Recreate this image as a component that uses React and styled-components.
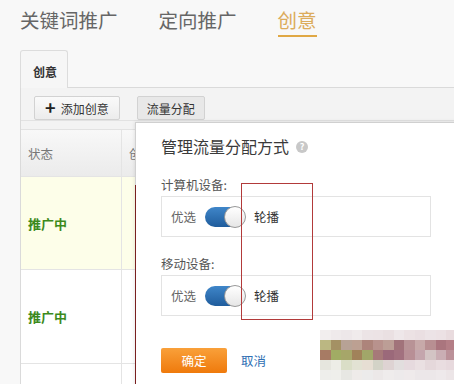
import React from 'react'
import styled, { createGlobalStyle } from 'styled-components'

const Global = createGlobalStyle`
  html, body { margin: 0; padding: 0; }
  body {
    font-family: "Noto Sans CJK SC", "Noto Sans", sans-serif;
    background: #f8f8f8;
  }
`

const Page = styled.div`
  position: relative;
  width: 454px;
  height: 384px;
  overflow: hidden;
  background: #f8f8f8;
  padding-left: 20px;
  box-sizing: border-box;
`

const Nav = styled.div`
  display: flex;
  gap: 41px;
  height: 50px;
  padding-top: 7px;
  box-sizing: border-box;
`

const NavItem = styled.div`
  font-size: 19.5px;
  line-height: 26px;
  height: 28px;
  color: ${p => (p.active ? '#dcac5c' : '#666')};
  border-bottom: 2px solid ${p => (p.active ? '#e0a845' : 'transparent')};
`

const TabRow = styled.div`
  display: flex;
  height: 37px;
`

const Tab = styled.div`
  width: 48px;
  height: 38px;
  box-sizing: border-box;
  border: 1px solid #dcdcdc;
  border-bottom: none;
  border-radius: 3px 3px 0 0;
  background: #f6f6f6;
  font-size: 12px;
  font-weight: bold;
  color: #333;
  padding: 12px 0 0 12px;
  position: relative;
  z-index: 1;
`

const Panel = styled.div`
  border-top: 1px solid #dadada;
  border-left: 1px solid #dadada;
  background: #f3f3f3;
`

const Toolbar = styled.div`
  display: flex;
  gap: 17px;
  padding: 8px 0 0 13px;
  height: 33px;
  box-sizing: border-box;
  border-bottom: 1px solid #e2e2e2;
`

const Button = styled.div`
  height: 24px;
  box-sizing: border-box;
  padding: 0 ${p => p.px || 9}px;
  border: 1px solid #d2d2d2;
  border-radius: 2px;
  background: ${p => (p.pressed ? '#e8e8e8' : 'linear-gradient(#fafafa, #ececec)')};
  font-size: 12px;
  color: #333;
  display: flex;
  align-items: center;
  gap: 5px;
`

const Plus = styled.span`
  font-size: 18px;
  font-weight: bold;
  line-height: 1;
  color: #222;
  margin-top: -2px;
`

const Table = styled.div`
  margin-top: 8px;
  background: #fff;
`

const Row = styled.div`
  display: grid;
  grid-template-columns: 101px 1fr;
  height: ${p => p.h}px;
  border-bottom: 1px solid #e4e4e4;
  background: ${p => p.bg || '#fff'};
`

const Cell = styled.div`
  display: flex;
  align-items: center;
  padding-left: 7px;
  border-right: 1px solid #e4e4e4;
  font-size: ${p => (p.status ? 13 : 12.5)}px;
  font-weight: ${p => (p.status ? 'bold' : 'normal')};
  color: ${p => (p.status ? '#3c8a1c' : '#777')};
`

const HeadRow = styled(Row)`
  background: linear-gradient(#f8f8f8, #ebebeb);
  border-top: 1px solid #e2e2e2;
`

const Popup = styled.div`
  position: absolute;
  left: 135px;
  top: 122px;
  width: 330px;
  height: 272px;
  box-sizing: border-box;
  background: #fff;
  border: 1px solid #d0d0d0;
  box-shadow: 0 0 4px rgba(0, 0, 0, 0.12);
  padding: 12px 0 0 25px;
  &::before {
    content: '';
    position: absolute;
    left: -1px;
    top: 62px;
    bottom: 0;
    width: 1px;
    background: #7a2020;
  }
`

const Title = styled.div`
  display: flex;
  align-items: center;
  gap: 7px;
  font-size: 16px;
  line-height: 22px;
  color: #3a3a3a;
`

const Help = styled.span`
  width: 12px;
  height: 12px;
  border-radius: 50%;
  background: #c8c8c8;
  color: #fff;
  font-size: 9px;
  font-weight: bold;
  display: inline-flex;
  align-items: center;
  justify-content: center;
  margin-top: 2px;
`

const Label = styled.div`
  font-size: 12.5px;
  line-height: 16px;
  color: #555;
  margin-top: ${p => p.mt}px;
`

const Box = styled.div`
  width: 270px;
  height: 41px;
  box-sizing: border-box;
  margin-top: 3px;
  border: 1px solid #e3e3e3;
  display: flex;
  align-items: center;
  padding-left: 9px;
  font-size: 12.5px;
`

const Opt = styled.span`
  color: ${p => (p.on ? '#333' : '#666')};
`

const Toggle = styled.div`
  position: relative;
  width: 36px;
  height: 20px;
  margin: 0 13px 0 9px;
  border-radius: 10px;
  background: linear-gradient(#3f86c9, #1f5c9c);
`

const Knob = styled.div`
  position: absolute;
  right: -5px;
  top: -1px;
  width: 20px;
  height: 20px;
  border-radius: 50%;
  background: linear-gradient(#fff, #e6e6e6);
  border: 1px solid #999;
`

const Actions = styled.div`
  display: flex;
  align-items: center;
  gap: 14px;
  margin-top: 32px;
`

const Primary = styled.div`
  width: 66px;
  height: 25px;
  border-radius: 2px;
  background: linear-gradient(#f9a03a, #ef7a0c);
  color: #fff;
  font-size: 12.5px;
  display: flex;
  align-items: center;
  justify-content: center;
`

const Link = styled.span`
  color: #2f6fb3;
  font-size: 12.5px;
`

const Annotation = styled.div`
  position: absolute;
  left: 241px;
  top: 183px;
  width: 72px;
  height: 137px;
  border: 1px solid #b23a3a;
  box-sizing: border-box;
`

const Mosaic = styled.div`
  position: absolute;
  left: 320px;
  top: 330px;
  display: grid;
  grid-template-columns: repeat(13, 10.5px);
  grid-auto-rows: 10px;
  opacity: 0.95;
`

const Block = styled.div`
  background: ${p => p.c};
`

const mosaic = [
  ['#f2eeee', '#efe9ea', '#ede6e8', '#f0eaeb', '#ece3e5', '#ebe2e4', '#e9dfe1', '#eee6e8', '#ebe1e3', '#e9dee1', '#ece2e5', '#ebe0e3', '#e8dadd'],
  ['#b8b47c', '#a08c5c', '#b49e90', '#b99b8d', '#a97e74', '#b58d87', '#b99991', '#9d6c73', '#b58e91', '#c5a5a5', '#b58a8d', '#a66e78', '#b07880'],
  ['#a3745c', '#9ca85c', '#a2a262', '#9c7c52', '#9ca262', '#a27272', '#966273', '#9e6a79', '#b58a91', '#c1a2a9', '#d1c1c1', '#c8aab0', '#b88c94'],
  ['#e5e5dd', '#edede5', '#d9ddc5', '#e1e1d1', '#e5ddd1', '#d1d1c5', '#ddd1d1', '#e1dddd', '#e5d9dd', '#e9dfe1', '#e4d6da', '#e8dcdf', '#e6d8dc'],
  ['#eeeeea', '#efefea', '#e6e6e2', '#eeeae8', '#eceaea', '#ebe7e7', '#efebeb', '#ede9ea', '#efe9ea', '#ece6e8', '#ece6e8', '#eee8ea', '#ebe4e6'],
]

export default function App() {
  return (
    <Page>
      <Global />
      <Nav>
        <NavItem>关键词推广</NavItem>
        <NavItem>定向推广</NavItem>
        <NavItem active>创意</NavItem>
      </Nav>
      <TabRow>
        <Tab>创意</Tab>
      </TabRow>
      <Panel>
        <Toolbar>
          <Button px={10}>
            <Plus>+</Plus>添加创意
          </Button>
          <Button pressed>流量分配</Button>
        </Toolbar>
        <Table>
          <HeadRow h={46}>
            <Cell>状态</Cell>
            <Cell>创意</Cell>
          </HeadRow>
          <Row h={92} bg="#fdfee9">
            <Cell status>推广中</Cell>
            <Cell />
          </Row>
          <Row h={93}>
            <Cell status>推广中</Cell>
            <Cell />
          </Row>
          <Row h={40}>
            <Cell />
            <Cell />
          </Row>
        </Table>
      </Panel>

      <Popup>
        <Title>
          管理流量分配方式<Help>?</Help>
        </Title>
        <Label mt={20}>计算机设备:</Label>
        <Box>
          <Opt>优选</Opt>
          <Toggle><Knob /></Toggle>
          <Opt on>轮播</Opt>
        </Box>
        <Label mt={19}>移动设备:</Label>
        <Box>
          <Opt>优选</Opt>
          <Toggle><Knob /></Toggle>
          <Opt on>轮播</Opt>
        </Box>
        <Actions>
          <Primary>确定</Primary>
          <Link>取消</Link>
        </Actions>
      </Popup>
      <Annotation />
      <Mosaic>
        {mosaic.flat().map((c, i) => (
          <Block key={i} c={c} />
        ))}
      </Mosaic>
    </Page>
  )
}
